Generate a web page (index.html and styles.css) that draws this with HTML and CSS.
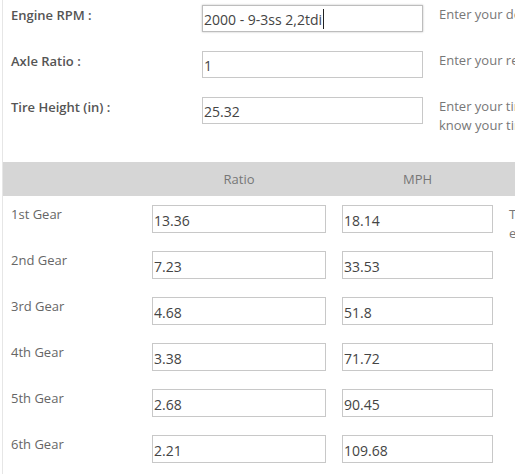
FILE: index.html
```html
<!DOCTYPE html>
<html>
<head>
<meta charset="utf-8">
<link rel="stylesheet" href="styles.css">
</head>
<body>
<div class="page">
  <div class="settings">
    <div class="srow">
      <div class="slabel">Engine RPM :</div>
      <div class="scell"><input class="sinput focused" type="text" value="2000 - 9-3ss 2,2tdi"><span class="caret"></span></div>
      <div class="shelp">Enter your desired engine RPM</div>
    </div>
    <div class="srow">
      <div class="slabel">Axle Ratio :</div>
      <div class="scell"><input class="sinput" type="text" value="1"></div>
      <div class="shelp">Enter your rear axle ratio</div>
    </div>
    <div class="srow">
      <div class="slabel">Tire Height (in) :</div>
      <div class="scell"><input class="sinput" type="text" value="25.32"></div>
      <div class="shelp">Enter your tire height in inches. If you don't<br>know your tire height, use the tire calculator.</div>
    </div>
  </div>

  <div class="gears">
    <div class="ghead">
      <div></div>
      <div class="gh">Ratio</div>
      <div class="gh">MPH</div>
      <div></div>
    </div>
    <div class="grow">
      <div class="glabel">1st Gear</div>
      <div class="gcell"><input class="ginput ratio" type="text" value="13.36"></div>
      <div class="gcell"><input class="ginput mph" type="text" value="18.14"></div>
      <div class="gnote">The speed in each gear at the selected<br>engine RPM is calculated automatically.</div>
    </div>
    <div class="grow">
      <div class="glabel">2nd Gear</div>
      <div class="gcell"><input class="ginput ratio" type="text" value="7.23"></div>
      <div class="gcell"><input class="ginput mph" type="text" value="33.53"></div>
      <div class="gnote"></div>
    </div>
    <div class="grow">
      <div class="glabel">3rd Gear</div>
      <div class="gcell"><input class="ginput ratio" type="text" value="4.68"></div>
      <div class="gcell"><input class="ginput mph" type="text" value="51.8"></div>
      <div class="gnote"></div>
    </div>
    <div class="grow">
      <div class="glabel">4th Gear</div>
      <div class="gcell"><input class="ginput ratio" type="text" value="3.38"></div>
      <div class="gcell"><input class="ginput mph" type="text" value="71.72"></div>
      <div class="gnote"></div>
    </div>
    <div class="grow">
      <div class="glabel">5th Gear</div>
      <div class="gcell"><input class="ginput ratio" type="text" value="2.68"></div>
      <div class="gcell"><input class="ginput mph" type="text" value="90.45"></div>
      <div class="gnote"></div>
    </div>
    <div class="grow">
      <div class="glabel">6th Gear</div>
      <div class="gcell"><input class="ginput ratio" type="text" value="2.21"></div>
      <div class="gcell"><input class="ginput mph" type="text" value="109.68"></div>
      <div class="gnote"></div>
    </div>
  </div>
</div>
</body>
</html>
```
FILE: styles.css
```css
html, body {
  margin: 0;
  padding: 0;
  background: #fff;
  overflow: hidden;
}
body {
  font-family: "Open Sans", "Noto Sans", sans-serif;
  color: #555;
  font-size: 13px;
}
.page {
  margin-left: 2px;
  border-left: 1px solid #e6e6e6;
  width: 820px;
  min-height: 474px;
}
.settings {
  padding-bottom: 24px;
}
.srow {
  display: grid;
  grid-template-columns: 191px 237px 1fr;
  height: 46px;
  padding-top: 5px;
  box-sizing: border-box;
}
.slabel {
  padding-left: 8px;
  font-weight: 600;
  line-height: 20px;
  color: #555;
}
.scell {
  padding-left: 8px;
  position: relative;
}
.sinput {
  width: 221px;
  height: 27px;
  box-sizing: border-box;
  border: 1px solid #c8c8c8;
  padding: 2px 1px 0;
  font-family: "Open Sans", "Noto Sans", sans-serif;
  font-size: 14px;
  color: #444;
  outline: none;
  margin: 0;
  background: #fff;
}
.sinput.focused {
  border-color: #bdbdbd;
  box-shadow: 0 0 2px rgba(0,0,0,0.25);
}
.caret {
  position: absolute;
  left: 129px;
  top: 4px;
  width: 1px;
  height: 20px;
  background: #222;
}
.shelp {
  padding-left: 8px;
  line-height: 19px;
  color: #777;
  white-space: nowrap;
}
.ghead {
  display: grid;
  grid-template-columns: 141px 190px 167px 1fr;
  background: #d6d6d6;
  height: 34px;
  align-items: center;
}
.gh {
  text-align: center;
  color: #777;
  font-size: 13px;
}
.grow {
  display: grid;
  grid-template-columns: 141px 190px 167px 1fr;
  height: 46px;
  padding-top: 9px;
  box-sizing: border-box;
}
.glabel {
  padding-left: 8px;
  line-height: 18px;
  color: #666;
}
.gcell {
  padding-left: 8px;
}
.ginput {
  height: 28px;
  box-sizing: border-box;
  border: 1px solid #c8c8c8;
  padding: 2px 1px 0;
  font-family: "Open Sans", "Noto Sans", sans-serif;
  font-size: 14px;
  color: #444;
  outline: none;
  margin: 0;
  background: #fff;
}
.ginput.ratio { width: 174px; }
.ginput.mph { width: 151px; }
.gnote {
  padding-left: 8px;
  line-height: 19px;
  color: #777;
  white-space: nowrap;
}
```
